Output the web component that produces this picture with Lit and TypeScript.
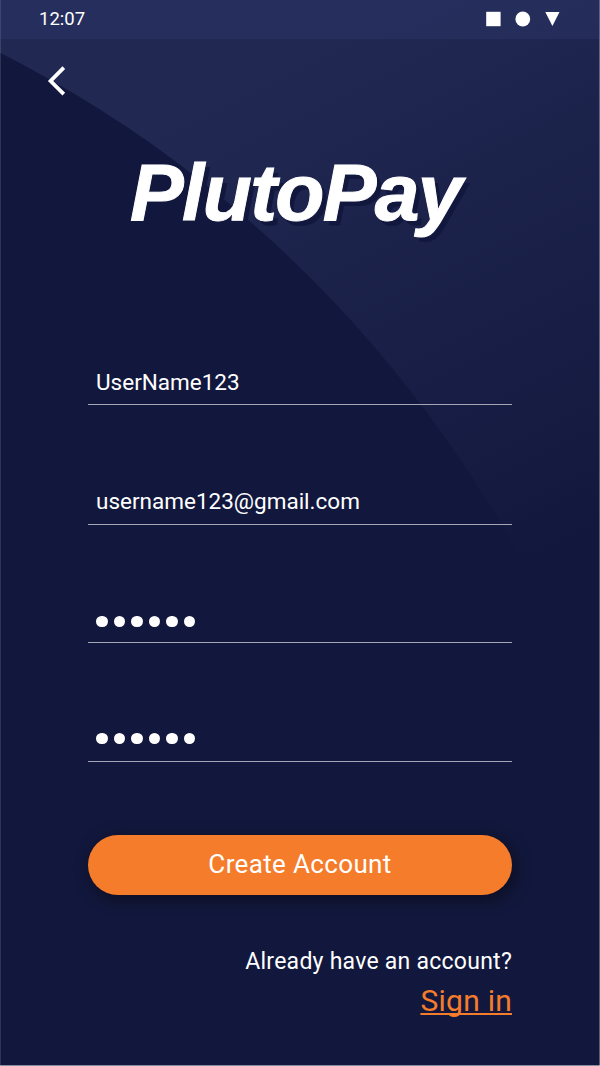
import { LitElement, html, css, svg } from "lit";
import { customElement } from "lit/decorators.js";

@customElement("app-root")
export class AppRoot extends LitElement {
  static styles = css`
    :host {
      display: block;
      font-family: Roboto, "Liberation Sans", sans-serif;
      color: #fff;
    }
    * {
      box-sizing: border-box;
    }
    .screen {
      position: relative;
      width: 600px;
      height: 1066px;
      overflow: hidden;
      background: #12183d;
      isolation: isolate;
      display: flex;
      flex-direction: column;
    }
    .backdrop {
      position: absolute;
      inset: 0;
      z-index: -1;
    }
    .status {
      height: 39px;
      flex: none;
      display: flex;
      align-items: center;
      justify-content: space-between;
      padding: 0 40px 2px 39px;
      background: rgba(80, 90, 170, 0.13);
      font-size: 18.5px;
      line-height: 20px;
    }
    .status svg,
    .back svg {
      display: block;
    }
    .back {
      display: flex;
      align-items: flex-start;
      padding: 26px 0 0 46px;
      height: 61px;
      flex: none;
      border: 0;
      background: none;
    }
    .brand {
      margin: 47px 0 0 130px;
      height: 90px;
      flex: none;
      font: italic 700 80.5px/90px "Liberation Sans", sans-serif;
      letter-spacing: -1.7px;
      white-space: nowrap;
      -webkit-text-stroke: 1px #fff;
      text-shadow: 4.5px 4.5px 0 #12183d;
    }
    .form {
      margin: 48px 88px 0;
      display: flex;
      flex-direction: column;
    }
    .field {
      height: 119px;
      padding: 0 8px 8px;
      display: flex;
      align-items: flex-end;
      border-bottom: 1px solid #a5a5b6;
      font-size: 22.5px;
      line-height: 28px;
    }
    .field.short {
      height: 118px;
    }
    .field.tall {
      height: 120px;
    }
    .field.email {
      padding-bottom: 9px;
    }
    .dots {
      display: flex;
      gap: 6px;
      padding-bottom: 9px;
    }
    .dots.low {
      padding-bottom: 7px;
    }
    .dot {
      width: 11.5px;
      height: 11.5px;
      border-radius: 50%;
      background: #fff;
    }
    .create {
      margin-top: 73px;
      height: 60px;
      border: 0;
      padding: 0 0 2px;
      border-radius: 30px;
      background: #f57c2b;
      color: #fff;
      font: 26px/30px Roboto, sans-serif;
      letter-spacing: 0.35px;
      box-shadow: 3px 4px 14px 2px rgba(14, 14, 28, 0.75);
    }
    .foot {
      margin-top: 53px;
      text-align: right;
      font-size: 23px;
      line-height: 28px;
      letter-spacing: 0.25px;
    }
    .signin {
      display: block;
      margin-top: 7px;
      color: #f57c2b;
      font-size: 30px;
      line-height: 36px;
      text-decoration: underline;
      text-decoration-thickness: 1.5px;
      text-underline-offset: 2px;
      text-decoration-skip-ink: none;
    }
  `;

  private backdrop() {
    return svg`<svg class="backdrop" width="600" height="1066" viewBox="0 0 600 1066">
      <defs>
        <linearGradient id="glow" gradientUnits="userSpaceOnUse" x1="100" y1="160" x2="352" y2="657">
          <stop offset="0" stop-color="#212852"/>
          <stop offset="1" stop-color="#12183d"/>
        </linearGradient>
      </defs>
      <rect width="600" height="1066" fill="url(#glow)"/>
      <circle cx="-554" cy="1143" r="1223" fill="#12183d"/>
      <rect width="1" height="1066" fill="#fff" opacity="0.12"/>
      <rect x="599" width="1" height="1066" fill="#fff" opacity="0.3"/>
      <rect y="1065" width="600" height="1" fill="#fff" opacity="0.5"/>
    </svg>`;
  }

  private dots(low = false) {
    return html`<div class="dots ${low ? "low" : ""}">
      ${Array.from({ length: 6 }, () => html`<span class="dot"></span>`)}
    </div>`;
  }

  render() {
    return html`
      <main class="screen">
        ${this.backdrop()}
        <header class="status">
          <span>12:07</span>
          <svg width="75" height="16" viewBox="0 0 75 16" fill="#fff">
            <rect x="1.2" y="0.8" width="14.4" height="14.4" />
            <circle cx="37.8" cy="8" r="7.4" />
            <path d="M60.3 1h14.2l-7.1 14z" />
          </svg>
        </header>
        <button class="back" aria-label="Back">
          <svg width="22" height="32" viewBox="0 0 22 32" fill="none" stroke="#fff" stroke-width="3.8">
            <path d="M17.8 2.6 4.6 16 17.8 29.2" />
          </svg>
        </button>
        <div class="brand">PlutoPay</div>
        <section class="form">
          <div class="field tall">UserName123</div>
          <div class="field tall email">username123@gmail.com</div>
          <div class="field short">${this.dots(true)}</div>
          <div class="field">${this.dots()}</div>
          <button class="create">Create Account</button>
          <div class="foot">
            Already have an account?
            <a class="signin">Sign in</a>
          </div>
        </section>
      </main>
    `;
  }
}
